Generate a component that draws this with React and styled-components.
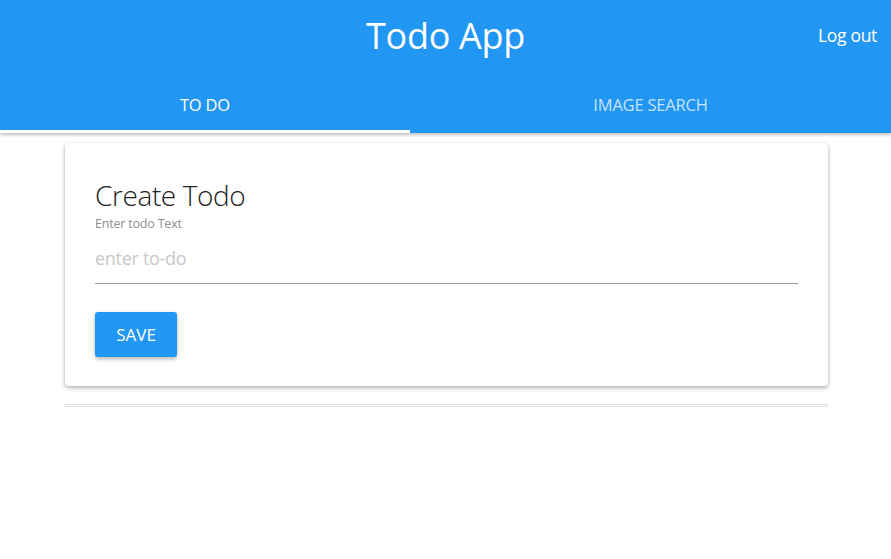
import styled, { createGlobalStyle } from 'styled-components';

const GlobalStyle = createGlobalStyle`
  html, body {
    margin: 0;
    padding: 0;
    background: #fff;
    font-family: "Open Sans", "Noto Sans", sans-serif;
  }
`;

const Header = styled.header`
  background-color: #2196f3;
  color: #fff;
  box-shadow: 0 2px 3px rgba(0, 0, 0, 0.25);
`;

const TopBar = styled.div`
  position: relative;
  height: 76px;
  display: flex;
  align-items: center;
  justify-content: center;
`;

const Title = styled.h1`
  margin: 0 0 5px;
  font-size: 36px;
  font-weight: 400;
  letter-spacing: -0.3px;
`;

const LogoutLink = styled.a`
  position: absolute;
  right: 14px;
  top: 23px;
  font-size: 17.5px;
  color: #fff;
  cursor: pointer;
  letter-spacing: -0.3px;
`;

const Tabs = styled.nav`
  display: flex;
  height: 57px;
`;

const Tab = styled.button`
  flex: ${p => (p.$grow ? '1' : '0 0 410px')};
  background: none;
  border: none;
  border-bottom: 3px solid ${p => (p.$active ? '#fff' : 'transparent')};
  color: ${p => (p.$active ? '#fff' : 'rgba(255, 255, 255, 0.75)')};
  font-family: inherit;
  font-size: 16.5px;
  letter-spacing: -0.2px;
  text-transform: uppercase;
  padding: 3px 0 0;
  cursor: pointer;
`;

const Main = styled.main`
  margin: 10px 63px 0 65px;
`;

const Card = styled.section`
  background: #fff;
  border-radius: 4px;
  box-shadow: 0 2px 4px rgba(0, 0, 0, 0.3), 0 0 2px rgba(0, 0, 0, 0.08);
  padding: 33px 30px 29px;
`;

const CardTitle = styled.h2`
  margin: 0;
  font-size: 28px;
  font-weight: 300;
  color: #222;
  letter-spacing: -0.4px;
  line-height: 38px;
`;

const FieldLabel = styled.label`
  display: block;
  font-size: 12.5px;
  color: #909090;
  margin-top: 1px;
  letter-spacing: -0.2px;
`;

const TextInput = styled.input`
  display: block;
  width: 100%;
  box-sizing: border-box;
  border: none;
  border-bottom: 1px solid #999;
  outline: none;
  padding: 14px 0 13px;
  font-family: inherit;
  font-size: 18px;
  color: #333;
  letter-spacing: -0.3px;

  &::placeholder {
    color: #c8c8c8;
  }
`;

const SaveButton = styled.button`
  margin-top: 28px;
  width: 82px;
  height: 45px;
  background-color: #2196f3;
  border: none;
  border-radius: 3px;
  color: #fff;
  font-family: inherit;
  font-size: 17px;
  text-transform: uppercase;
  box-shadow: 0 2px 4px rgba(0, 0, 0, 0.3);
  cursor: pointer;
`;

const Divider = styled.div`
  margin-top: 18px;
  height: 1px;
  border: 1px solid #e2e2e2;
`;

export default function App() {
  return (
    <>
      <GlobalStyle />
      <Header>
        <TopBar>
          <Title>Todo App</Title>
          <LogoutLink>Log out</LogoutLink>
        </TopBar>
        <Tabs>
          <Tab $active>To do</Tab>
          <Tab $grow>Image search</Tab>
        </Tabs>
      </Header>
      <Main>
        <Card>
          <CardTitle>Create Todo</CardTitle>
          <FieldLabel>Enter todo Text</FieldLabel>
          <TextInput placeholder="enter to-do" />
          <SaveButton>Save</SaveButton>
        </Card>
        <Divider />
      </Main>
    </>
  );
}
